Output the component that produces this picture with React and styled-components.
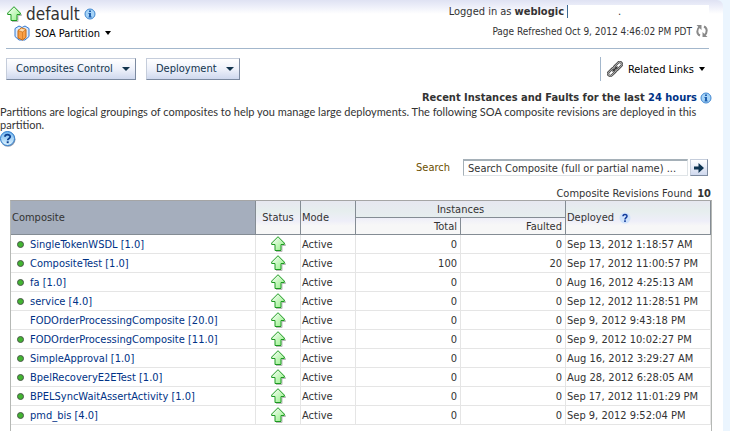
import React from 'react';
import styled, { createGlobalStyle } from 'styled-components';

const GlobalStyle = createGlobalStyle`
  * {
    box-sizing: border-box;
  }

  body {
    margin: 0;
    background: #ebf5fe;
    color: #333333;
    font: 11px/13px 'DejaVu Sans Condensed', Tahoma, 'DejaVu Sans', sans-serif;
  }

  button, input {
    font: inherit;
    margin: 0;
  }

  svg {
    flex: none;
  }

  a {
    color: #003286;
    text-decoration: none;
  }
`;

const Page = styled.main`
  margin-right: 7px;
  min-height: 100vh;
  overflow: hidden;
  background: linear-gradient(#dfe2f3, #eceef9 6px, #ffffff 14px);
  border-radius: 0 6px 0 0;
`;

const Header = styled.header`
  display: flex;
  justify-content: space-between;
  margin: 0 14px 0 6px;
  height: 49px;
  border-bottom: 1px solid #a3b7cc;
`;

const TitleRow = styled.div`
  display: flex;
  align-items: center;
  gap: 4px;
  padding-top: 3px;
`;

const Title = styled.h1`
  margin: 0;
  font-size: 17px;
  line-height: 22px;
  font-weight: normal;
`;

const MenuButton = styled.button`
  display: flex;
  align-items: center;
  gap: 5px;
  padding: 0;
  border: 0;
  background: none;
  color: #000000;
`;

const PartitionMenu = styled(MenuButton)`
  margin-left: 8px;
`;

const HeaderInfo = styled.div`
  display: flex;
  flex-direction: column;
  align-items: flex-end;
  gap: 6px;
  padding-top: 5px;
`;

const Login = styled.div`
  display: flex;
  gap: 3px;
`;

const Blank = styled.span`
  width: 142px;
  padding-left: 50px;
  border-left: 1px solid #3c6a94;
  background: #ffffff;
`;

const Refreshed = styled.div`
  display: flex;
  align-items: center;
  gap: 3px;
  font-size: 10px;
`;

const IconButton = styled.button`
  display: flex;
  padding: 0;
  border: 0;
  background: none;
`;

const Toolbar = styled.div`
  display: flex;
  align-items: center;
  gap: 10px;
  padding: 8px 18px 0 6px;
`;

const DropButton = styled.button`
  display: flex;
  align-items: center;
  justify-content: space-between;
  width: ${(props) => props.$width}px;
  height: 22px;
  padding: 0 5px 1px 9px;
  border: 1px solid #c5cddb;
  border-right-color: #7c8aa0;
  border-bottom-color: #7c8aa0;
  background: linear-gradient(#ffffff, #eef1fa 50%, #cfd8ee);
  color: #12344d;
`;

const Related = styled.div`
  display: flex;
  align-items: center;
  height: 24px;
  margin-left: auto;
  padding-left: 6px;
  border-left: 1px solid #a3b7cc;
`;

const Recent = styled.h2`
  display: flex;
  justify-content: flex-end;
  align-items: center;
  gap: 3px;
  margin: 10px 11px 1px 0;
  font-size: 11px;
  line-height: 13px;
`;

const Intro = styled.p`
  margin: 0 10px 0 0;
  font-family: Lato, Tahoma, sans-serif;
`;

const HelpLink = styled.a`
  display: block;
  width: 16px;
  height: 16px;
`;

const SearchForm = styled.form`
  display: flex;
  justify-content: flex-end;
  align-items: center;
  margin: 12px 15px 0 0;
`;

const SearchLabel = styled.label`
  margin-right: 13px;
  color: #6b4f00;
`;

const SearchInput = styled.input`
  width: 225px;
  height: 17px;
  margin-right: 2px;
  padding: 0 4px;
  border: 1px solid #dfe4e7;
  border-top: 2px solid #a5b0b8;
  border-left-color: #a5b0b8;
  color: #333333;
`;

const GoButton = styled.button`
  display: flex;
  align-items: center;
  justify-content: center;
  width: 18px;
  height: 17px;
  padding: 0;
  border: 1px solid #c5cddb;
  border-right-color: #7c8aa0;
  border-bottom-color: #7c8aa0;
  background: linear-gradient(#ffffff, #cfd8ee);
`;

const Found = styled.div`
  display: flex;
  justify-content: flex-end;
  gap: 5px;
  margin: 11px 12px 0 0;
`;

const TableFrame = styled.div`
  margin: 0 11px 0 10px;
  min-height: 232px;
  border: 1px solid #b5b8b5;
  border-top-color: #a5a5a5;
  border-bottom: 0;
`;

const Table = styled.table`
  width: 100%;
  table-layout: fixed;
  border-collapse: separate;
  border-spacing: 0;
`;

const HeadRow = styled.tr`
  background: ${(props) => (props.$lower
    ? 'linear-gradient(#eeeef8, #f7f7f7 40%)'
    : 'linear-gradient(#e6e7f0, #e6eeee)')};
`;

const HeadCell = styled.th`
  height: 17px;
  padding: 0 ${(props) => (props.$align === 'right' ? 3 : 1)}px;
  border-right: 1px solid #848c94;
  border-bottom: 1px solid #848c94;
  font-weight: normal;
  text-align: ${(props) => props.$align || 'left'};
`;

const TallCell = styled(HeadCell)`
  background: ${(props) => (props.$sorted
    ? '#a5aebd'
    : 'linear-gradient(#e6e7f0, #e6eeee 30%, #eeeef8 60%, #f7f7f7 75%)')};
`;

const Deployed = styled.span`
  display: flex;
  align-items: center;
  gap: 5px;
`;

const Cell = styled.td`
  height: 19px;
  padding: 0 ${(props) => (props.$align === 'right' ? 3 : 1)}px;
  border-right: 1px solid #e5e5e5;
  border-bottom: 1px solid #e5e5e5;
  text-align: ${(props) => props.$align || 'left'};
  white-space: nowrap;
`;

const NameBox = styled.div`
  display: flex;
  align-items: center;
  gap: 6px;
  padding-left: 5px;
`;

const Dot = styled.span`
  width: 7px;
  height: 7px;
  border-radius: 50%;
  border: 1px solid #4a574a;
  background: #42b531;
  visibility: ${(props) => (props.$hidden ? 'hidden' : 'visible')};
`;

const UpIcon = styled.svg`
  display: block;
  margin: 0 auto;
`;

const UpArrow = () => (
  <UpIcon width="16" height="16" viewBox="0 0 16 16" role="img" aria-label="Up">
    <defs>
      <linearGradient id="up" x1="0" y1="0" x2="1" y2="1">
        <stop offset="0" stopColor="#ffffff" />
        <stop offset="1" stopColor="#8ef07f" />
      </linearGradient>
    </defs>
    <path d="M9 2l6.500 6.500V9.500H12v6H6" fill="none" stroke="#b9b9b9" />
    <path d="M8 .700L14.300 7v1.500H11v6H5v-6H1.700V7z" fill="url(#up)" stroke="#1d9a22" />
  </UpIcon>
);

const Caret = ({ color = '#000000', size = 6 }) => (
  <svg width={size} height="4" viewBox="0 0 6 4" preserveAspectRatio="none">
    <path d="M0 0h6L3 4z" fill={color} />
  </svg>
);

const InfoIcon = () => (
  <svg width="12" height="12" viewBox="0 0 12 12" role="img" aria-label="Info">
    <circle cx="6" cy="6" r="5" fill="#a5d3f7" stroke="#3f86cf" />
    <path d="M5 2.500h2v1.500H5zM4.500 5H7v3.500h.700v1H4.500v-1H5V6h-.500z" fill="#1f5fae" />
  </svg>
);

const HelpIcon = () => (
  <svg width="16" height="16" viewBox="0 0 16 16" role="img" aria-label="Help">
    <defs>
      <linearGradient id="help" x1="0" y1="0" x2="0" y2="1">
        <stop offset="0" stopColor="#6fb4f0" />
        <stop offset="1" stopColor="#e2f6ff" />
      </linearGradient>
    </defs>
    <circle cx="8" cy="8.300" r="7.500" fill="#8b98ad" />
    <circle cx="7.500" cy="7.500" r="7" fill="url(#help)" stroke="#2f7fd0" />
    <path d="M5 5.800C5 3 10.200 3 10.200 5.700 10.200 7.500 7.700 7.300 7.700 9.300" fill="none" stroke="#0b3f8f" strokeWidth="1.800" />
    <path d="M6.700 10.300h2v1.900h-2z" fill="#0b3f8f" />
  </svg>
);

const SmallHelpIcon = () => (
  <svg width="12" height="12" viewBox="0 0 12 12" role="img" aria-label="Help">
    <circle cx="6" cy="6" r="5.500" fill="#cfe2fb" />
    <path d="M4 4.300C4 2 8 2 8 4.200 8 5.700 6 5.500 6 7.500" fill="none" stroke="#123c9c" strokeWidth="1.500" />
    <path d="M5.200 8.300h1.600v1.600H5.200z" fill="#123c9c" />
  </svg>
);

const PartitionIcon = () => (
  <svg width="16" height="16" viewBox="0 0 16 16">
    <path d="M1 3.500L5 1l3 1.500L11 1l4 2.500v8L11 15H5l-4-3.500z" fill="#d9eaff" stroke="#3478cf" />
    <path d="M4 5.500L7.500 3 12 4.500v8L8.500 15 4 13z" fill="#f9a048" stroke="#c2660f" />
    <path d="M4 5.500L7.500 3 12 4.500 8.500 7z" fill="#ffdcae" stroke="#c96f14" strokeWidth=".700" />
    <path d="M8.500 7v7.500" stroke="#d67a22" strokeWidth=".800" />
  </svg>
);

const RefreshIcon = () => (
  <svg width="14" height="14" viewBox="0 0 14 14">
    <path d="M5 11.500C1.500 10 1.500 5 4.500 3M9 2.500c3.500 1.500 3.500 6.500.500 8.500" fill="none" stroke="#8a8a8a" strokeWidth="2" />
    <path d="M1.500 1H6.500V6zM12.500 13H7.500V8z" fill="#8a8a8a" />
  </svg>
);

const LinkIcon = () => (
  <svg width="16" height="16" viewBox="0 0 18 18">
    <g transform="rotate(-45 9 9)" fill="none">
      <rect x="-1" y="6.500" width="10.500" height="5" rx="2.500" stroke="#4a4a4a" strokeWidth="2.600" />
      <rect x="8.500" y="6.500" width="10.500" height="5" rx="2.500" stroke="#4a4a4a" strokeWidth="2.600" />
      <rect x="-1" y="6.500" width="10.500" height="5" rx="2.500" stroke="#c9c9c9" strokeWidth=".900" />
      <rect x="8.500" y="6.500" width="10.500" height="5" rx="2.500" stroke="#c9c9c9" strokeWidth=".900" />
      <path d="M5 9h8" stroke="#333333" strokeWidth="1.500" />
    </g>
  </svg>
);

const composites = [
  ['SingleTokenWSDL [1.0]', 0, 0, 'Sep 13, 2012 1:18:57 AM'],
  ['CompositeTest [1.0]', 100, 20, 'Sep 17, 2012 11:00:57 PM'],
  ['fa [1.0]', 0, 0, 'Aug 16, 2012 4:25:13 AM'],
  ['service [4.0]', 0, 0, 'Sep 12, 2012 11:28:51 PM'],
  ['FODOrderProcessingComposite [20.0]', 0, 0, 'Sep 9, 2012 9:43:18 PM', true],
  ['FODOrderProcessingComposite [11.0]', 0, 0, 'Sep 9, 2012 10:02:27 PM'],
  ['SimpleApproval [1.0]', 0, 0, 'Aug 16, 2012 3:29:27 AM'],
  ['BpelRecoveryE2ETest [1.0]', 0, 0, 'Aug 28, 2012 6:28:05 AM'],
  ['BPELSyncWaitAssertActivity [1.0]', 0, 0, 'Sep 17, 2012 11:01:29 PM'],
  ['pmd_bis [4.0]', 0, 0, 'Sep 9, 2012 9:52:04 PM'],
];

const App = () => {
  return (
    <>
      <GlobalStyle />
      <Page>
        <Header>
          <div>
            <TitleRow>
              <div><UpArrow /></div>
              <Title>default</Title>
              <InfoIcon />
            </TitleRow>
            <PartitionMenu><PartitionIcon />SOA Partition <Caret /></PartitionMenu>
          </div>
          <HeaderInfo>
            <Login>
              <span>Logged in as</span>
              <b>weblogic</b>
              <Blank>.</Blank>
            </Login>
            <Refreshed>
              Page Refreshed Oct 9, 2012 4:46:02 PM PDT
              <IconButton aria-label="Refresh"><RefreshIcon /></IconButton>
            </Refreshed>
          </HeaderInfo>
        </Header>

        <Toolbar>
          <DropButton $width={130}>Composites Control <Caret color="#12344d" size={8} /></DropButton>
          <DropButton $width={94}>Deployment <Caret color="#12344d" size={8} /></DropButton>
          <Related>
            <MenuButton><LinkIcon />Related Links <Caret /></MenuButton>
          </Related>
        </Toolbar>

        <Recent>
          <span>Recent Instances and Faults for the last <a href="#hours">24 hours</a></span>
          <InfoIcon />
        </Recent>
        <Intro>
          Partitions are logical groupings of composites to help you manage large deployments. The following SOA composite revisions are deployed in this partition.
        </Intro>
        <HelpLink href="#help"><HelpIcon /></HelpLink>

        <SearchForm>
          <SearchLabel htmlFor="search">Search</SearchLabel>
          <SearchInput id="search" defaultValue="Search Composite (full or partial name) ..." />
          <GoButton type="button" aria-label="Go">
            <svg width="10" height="10" viewBox="0 0 10 10">
              <path d="M0 3.500h4.500V0L10 5l-5.500 5V6.500H0z" fill="#0d3350" />
            </svg>
          </GoButton>
        </SearchForm>

        <Found>Composite Revisions Found <b>10</b></Found>
        <TableFrame>
          <Table>
            <colgroup>
              <col />
              <col width="45" />
              <col width="55" />
              <col width="105" />
              <col width="105" />
              <col width="145" />
            </colgroup>
            <thead>
              <HeadRow>
                <TallCell rowSpan="2" $sorted>Composite</TallCell>
                <TallCell rowSpan="2" $align="center">Status</TallCell>
                <TallCell rowSpan="2">Mode</TallCell>
                <HeadCell colSpan="2" $align="center">Instances</HeadCell>
                <TallCell rowSpan="2"><Deployed>Deployed <SmallHelpIcon /></Deployed></TallCell>
              </HeadRow>
              <HeadRow $lower>
                <HeadCell $align="right">Total</HeadCell>
                <HeadCell $align="right">Faulted</HeadCell>
              </HeadRow>
            </thead>
            <tbody>
              {composites.map(([name, total, faulted, deployed, noDot]) => (
                <tr key={name}>
                  <Cell>
                    <NameBox>
                      <Dot $hidden={noDot} />
                      <a href="#composite">{name}</a>
                    </NameBox>
                  </Cell>
                  <Cell><UpArrow /></Cell>
                  <Cell>Active</Cell>
                  <Cell $align="right">{total}</Cell>
                  <Cell $align="right">{faulted}</Cell>
                  <Cell>{deployed}</Cell>
                </tr>
              ))}
            </tbody>
          </Table>
        </TableFrame>
      </Page>
    </>
  );
};

export default App;
